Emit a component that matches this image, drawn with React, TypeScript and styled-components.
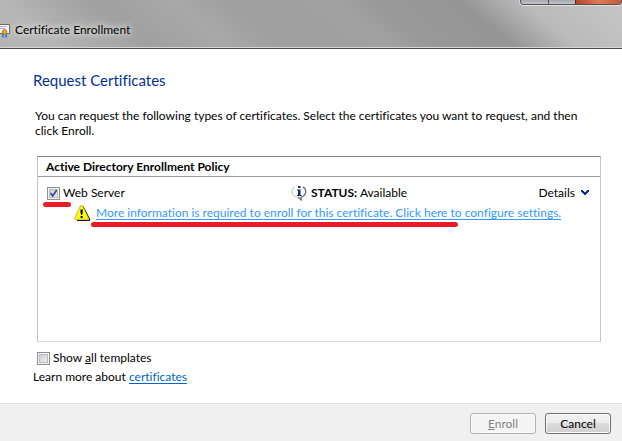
import React, { useState } from "react";
import styled, { createGlobalStyle } from "styled-components";

const GlobalStyle = createGlobalStyle`
  *, *::before, *::after { box-sizing: border-box; }
  body {
    margin: 0;
    background: #fff;
    color: #000;
    font: 12px/16px "Segoe UI", Lato, "Open Sans", sans-serif;
    font-variant-ligatures: none;
  }
  button, input { font: inherit; }
`;

const Window = styled.div`
  display: flex;
  flex-direction: column;
  min-height: 100vh;
`;

const TitleBar = styled.header`
  display: flex;
  justify-content: space-between;
  height: 49px;
  border-bottom: 1px solid #4c4c4c;
  box-shadow: inset 0 -1px #d6d6d6;
  background: linear-gradient(
    40deg,
    #b4b4b4 0%,
    #b6b6b6 8%,
    #a0a0a0 22%,
    #a8a8a8 34%,
    #9f9f9f 42%,
    #a1a1a1 58%,
    #999 63%,
    #959595 76%,
    #bababa 85%,
    #c6c6c6 100%
  );
`;

const Caption = styled.div`
  display: flex;
  align-items: center;
  gap: 5px;
  padding-top: 12px;
`;

const CaptionText = styled.span`
  text-shadow: 0 0 5px #e4e4e4, 0 0 8px #ddd, 0 0 10px #d4d4d4;
`;

const WindowControls = styled.div`
  display: flex;
  height: 5px;
  border: solid #4f4f55;
  border-width: 0 1px 1px;
  border-radius: 0 0 4px 4px;
  box-shadow: 0 1px #e4e4e4, -1px 0 #dadada;
  overflow: hidden;
`;

const ControlButton = styled.button<{ $danger?: boolean }>`
  width: ${(p) => (p.$danger ? 46 : 27)}px;
  padding: 0;
  border: 0;
  border-left: ${(p) => (p.$danger ? "1px solid #6b1d10" : "0")};
  background: ${(p) =>
    p.$danger
      ? "linear-gradient(90deg, #b8452c, #e07a58 50%, #c05a40)"
      : "linear-gradient(#a5a5ac, #c6c6ce)"};
  & + &:not(:last-child) {
    border-left: 1px solid #55555b;
  }
`;

const Page = styled.main`
  display: flex;
  flex: 1;
  flex-direction: column;
  padding: 20px 21px 18px 33px;
`;

const Heading = styled.h1`
  margin: 0;
  color: #003399;
  font-size: 15px;
  line-height: 22px;
  font-weight: 400;
`;

const Intro = styled.p`
  max-width: 560px;
  margin: 17px 0 18px 2px;
  line-height: 15px;
`;

const PolicyList = styled.section`
  flex: 1;
  margin-left: 4px;
  border: 1px solid #c4c4d0;
  border-top-color: #828790;
  border-bottom-color: #d4dae2;
`;

const PolicyTitle = styled.h2`
  margin: 0;
  padding: 2px 8px 1px;
  border-bottom: 1px solid #989ba0;
  font-size: 12px;
  line-height: 16px;
  font-weight: 700;
`;

const TemplateRow = styled.div`
  display: grid;
  grid-template-columns: 244px 1fr auto;
  align-items: center;
  padding: 8px 11px 0 9px;
`;

const Marked = styled.span`
  position: relative;
`;

const RedMark = styled.i<{ $wide?: boolean }>`
  position: absolute;
  top: 17px;
  left: ${(p) => (p.$wide ? -5 : -4)}px;
  width: ${(p) => (p.$wide ? 367 : 28)}px;
  height: 5px;
  border-radius: 3px;
  background: #ed1c24;
  pointer-events: none;
`;

const CheckLabel = styled.label`
  display: flex;
  align-items: center;
  gap: 3px;
`;

const CheckBox = styled.input`
  appearance: none;
  width: 13px;
  height: 13px;
  margin: 0;
  border: 1px solid #8e8f8f;
  background: linear-gradient(135deg, #c4c8ce, #f4f4f4);
  background-clip: padding-box;
  box-shadow: inset 0 0 0 1px #f4f4f4, inset 0 0 0 2px #b9bcc2;
  &:checked {
    background: url("data:image/svg+xml,%3Csvg xmlns='http://www.w3.org/2000/svg' viewBox='0 0 11 11'%3E%3Cpath d='M2.5 5 4.700 8 8.700 2' fill='none' stroke='%23394f91' stroke-width='1.800'/%3E%3C/svg%3E"),
      linear-gradient(135deg, #c4c8ce, #f4f4f4);
  }
`;

const Status = styled.span`
  display: flex;
  align-items: center;
  gap: 4px;
`;

const DetailsButton = styled.button`
  display: flex;
  align-items: center;
  gap: 6px;
  padding: 0;
  border: 0;
  background: none;
  color: #000;
`;

const Notice = styled.div`
  display: flex;
  align-items: center;
  gap: 6px;
  padding: 4px 0 0 36px;
`;

const Link = styled.a<{ $light?: boolean }>`
  color: ${(p) => (p.$light ? "#3399ff" : "#0066cc")};
  text-decoration: underline;
  text-decoration-skip-ink: none;
  text-underline-offset: 2px;
`;

const Options = styled.div`
  display: flex;
  flex-direction: column;
  gap: 3px;
  margin-top: 8px;
`;

const ShowAll = styled.div`
  display: flex;
  padding-left: 4px;
`;

const Footer = styled.footer`
  display: flex;
  justify-content: flex-end;
  gap: 9px;
  padding: 9px 11px 7px;
  border-top: 1px solid #dfdfdf;
  background: #f0f0f0;
`;

const PushButton = styled.button`
  width: 66px;
  height: 21px;
  padding: 0;
  border: 1px solid #707070;
  border-radius: 3px;
  background: linear-gradient(#f2f2f2, #ebebeb 49%, #ddd 50%, #cfcfcf);
  box-shadow: inset 0 0 0 1px #fafafa;
  color: #000;
  line-height: 17px;
  &:disabled {
    border-color: #adb2b5;
    background: #f4f4f4;
    color: #838383;
  }
`;

const CertificateIcon = () => (
  <svg width="10" height="15" viewBox="0 0 10 15" aria-hidden="true">
    <path d="M0 1.500h9.500v9H0" fill="#f8f8ff" stroke="#7c6549" />
    <path d="M0 3.500h7M0 5.500h6" stroke="#a8b4e8" />
    <path d="M3 10v4.500M6 10v4.500" fill="none" stroke="#2a72dc" strokeWidth="1.600" />
    <circle cx="4.500" cy="9" r="2.300" fill="#d99a0b" stroke="#b97907" />
    <circle cx="4.500" cy="9" r="1" fill="#f5c440" />
  </svg>
);

const InfoIcon = () => (
  <svg width="16" height="16" viewBox="0 0 16 16" aria-hidden="true">
    <path d="M8 .8c4 0 7 2.400 7 5.900 0 3-2 5-4.800 5.700L10 15l-3.200-2.500C3.200 12.200 1 9.800 1 6.700 1 3.200 4 .8 8 .8z" fill="#fff" />
    <path d="M4 1.800C1.500 3 .7 5 1 7.500c.4 2.400 2 4 4.500 4.700" fill="none" stroke="#bdbdbd" />
    <path d="M12 1.800c2 1.200 3 3 2.700 5.400-.3 2.500-2 4.300-4.600 5v2.700L6.800 12" fill="none" stroke="#777" strokeWidth="1.400" />
    <path d="M7 1h2.500v2H7zM6 4.500h3.500V10h1v1H6v-1h1V5.500H6z" fill="#0c2a80" />
  </svg>
);

const WarningIcon = () => (
  <svg width="16" height="16" viewBox="0 0 16 16" aria-hidden="true">
    <path d="M9 1.500 15.500 14v1.500H3" fill="none" stroke="#10106a" strokeWidth="1.200" />
    <path d="M6.500.8h2L14.300 13v1.300H.8V13z" fill="#ff0" stroke="#b8b000" strokeWidth=".8" />
    <path d="M6.500 4.500h2.200v3L8.200 10H7l-.5-2.500zM6.600 11h2v2h-2z" fill="#000" />
  </svg>
);

const ChevronIcon = () => (
  <svg width="8" height="6" viewBox="0 0 8 6" aria-hidden="true">
    <path d="M0 0h2v1h1v1h2V1h1V0h2v2H7v1H6v1H5v1H3V4H2V3H1V2H0z" fill="#003399" />
  </svg>
);

export default function App() {
  const [webServer, setWebServer] = useState(true);
  const [showAll, setShowAll] = useState(false);

  return (
    <>
      <GlobalStyle />
      <Window>
        <TitleBar>
          <Caption>
            <CertificateIcon />
            <CaptionText>Certificate Enrollment</CaptionText>
          </Caption>
          <WindowControls>
            <ControlButton aria-label="Minimize" />
            <ControlButton aria-label="Maximize" />
            <ControlButton aria-label="Close" $danger />
          </WindowControls>
        </TitleBar>
        <Page>
          <Heading>Request Certificates</Heading>
          <Intro>
            You can request the following types of certificates. Select the certificates you want to request, and then
            click Enroll.
          </Intro>
          <PolicyList>
            <PolicyTitle>Active Directory Enrollment Policy</PolicyTitle>
            <TemplateRow>
              <Marked>
                <CheckLabel>
                  <CheckBox type="checkbox" checked={webServer} onChange={(e) => setWebServer(e.target.checked)} />
                  Web Server
                </CheckLabel>
                <RedMark />
              </Marked>
              <Status>
                <InfoIcon />
                <span>
                  <b>STATUS:</b> Available
                </span>
              </Status>
              <DetailsButton>
                Details
                <ChevronIcon />
              </DetailsButton>
            </TemplateRow>
            <Notice>
              <WarningIcon />
              <Marked>
                <Link href="#configure" $light>
                  More information is required to enroll for this certificate. Click here to configure settings.
                </Link>
                <RedMark $wide />
              </Marked>
            </Notice>
          </PolicyList>
          <Options>
            <ShowAll>
              <CheckLabel>
                <CheckBox type="checkbox" checked={showAll} onChange={(e) => setShowAll(e.target.checked)} />
                <span>
                  Show <u>a</u>ll templates
                </span>
              </CheckLabel>
            </ShowAll>
            <div>
              Learn more about <Link href="#certificates">certificates</Link>
            </div>
          </Options>
        </Page>
        <Footer>
          <PushButton disabled>
            <u>E</u>nroll
          </PushButton>
          <PushButton>Cancel</PushButton>
        </Footer>
      </Window>
    </>
  );
}
